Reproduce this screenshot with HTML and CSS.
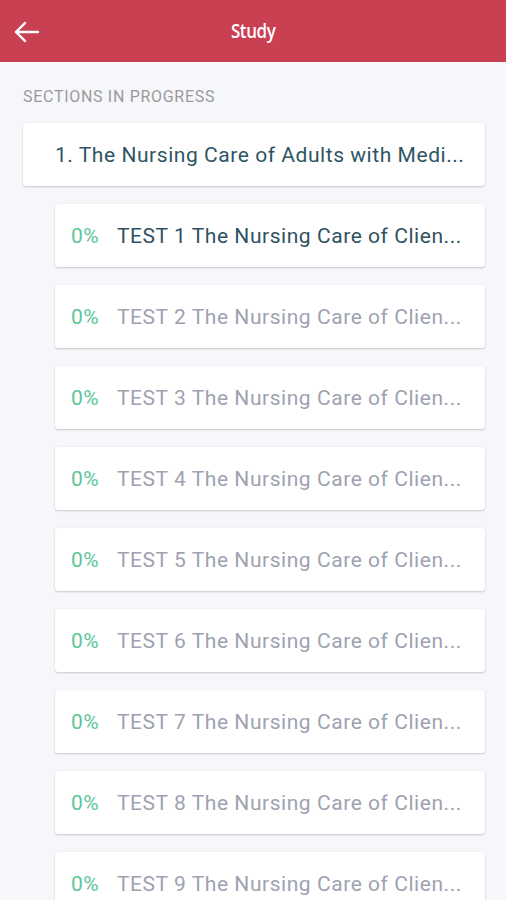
FILE: index.html
```html
<!DOCTYPE html>
<html>
<head>
<meta charset="utf-8">
<link rel="stylesheet" href="styles.css">
</head>
<body>
<header class="appbar">
  <svg class="back" width="26" height="22" viewBox="0 0 26 22"><path d="M25 11H3M12 2L3 11l9 9" fill="none" stroke="#fff" stroke-width="2.4" stroke-linecap="round" stroke-linejoin="round"/></svg>
  <div class="title">Study</div>
</header>
<main class="content">
  <div class="label">SECTIONS IN PROGRESS</div>
  <div class="card section"><span class="text">1. The Nursing Care of Adults with Medi...</span></div>
  <div class="list">
    <div class="card test active"><span class="pct">0%</span><span class="text">TEST 1 The Nursing Care of Clien...</span></div>
    <div class="card test"><span class="pct">0%</span><span class="text">TEST 2 The Nursing Care of Clien...</span></div>
    <div class="card test"><span class="pct">0%</span><span class="text">TEST 3 The Nursing Care of Clien...</span></div>
    <div class="card test"><span class="pct">0%</span><span class="text">TEST 4 The Nursing Care of Clien...</span></div>
    <div class="card test"><span class="pct">0%</span><span class="text">TEST 5 The Nursing Care of Clien...</span></div>
    <div class="card test"><span class="pct">0%</span><span class="text">TEST 6 The Nursing Care of Clien...</span></div>
    <div class="card test"><span class="pct">0%</span><span class="text">TEST 7 The Nursing Care of Clien...</span></div>
    <div class="card test"><span class="pct">0%</span><span class="text">TEST 8 The Nursing Care of Clien...</span></div>
    <div class="card test"><span class="pct">0%</span><span class="text">TEST 9 The Nursing Care of Clien...</span></div>
  </div>
</main>
</body>
</html>
```
FILE: styles.css
```css
* { box-sizing: border-box; }
html, body { margin: 0; padding: 0; }
body {
  background: #f6f7fa;
  font-family: Roboto, "Noto Sans", sans-serif;
  width: 506px;
  height: 900px;
  overflow: hidden;
}
.appbar {
  height: 62px;
  background: #c94052;
  display: flex;
  align-items: center;
  justify-content: center;
  position: relative;
}
.back {
  position: absolute;
  left: 13px;
  top: 21px;
}
.title {
  color: #fff;
  font-family: "Open Sans", sans-serif;
  font-weight: 600;
  font-size: 20px;
  letter-spacing: -0.5px;
  transform: scaleX(0.85);
  margin-top: -1px;
}
.content {
  padding: 25px 21px 0 23px;
}
.label {
  color: #9a9a9a;
  font-size: 16px;
  letter-spacing: 0.7px;
  line-height: 20px;
  margin-bottom: 16px;
}
.card {
  background: #fff;
  border-radius: 3px;
  height: 63px;
  display: flex;
  align-items: center;
  box-shadow: 0 1px 2px rgba(0,0,0,0.18), 0 0 1px rgba(0,0,0,0.12);
  white-space: nowrap;
  overflow: hidden;
  font-size: 21px;
  letter-spacing: 0.55px;
}
.section {
  padding-left: 32px;
  color: #2f5563;
}
.list {
  display: flex;
  flex-direction: column;
  gap: 18px;
  margin-top: 18px;
  margin-left: 32px;
}
.test {
  padding-left: 16px;
}
.pct {
  color: #5cc699;
  width: 46px;
  flex: none;
}
.test .text { color: #9ea2b1; }
.test.active .text { color: #30525f; }
```
